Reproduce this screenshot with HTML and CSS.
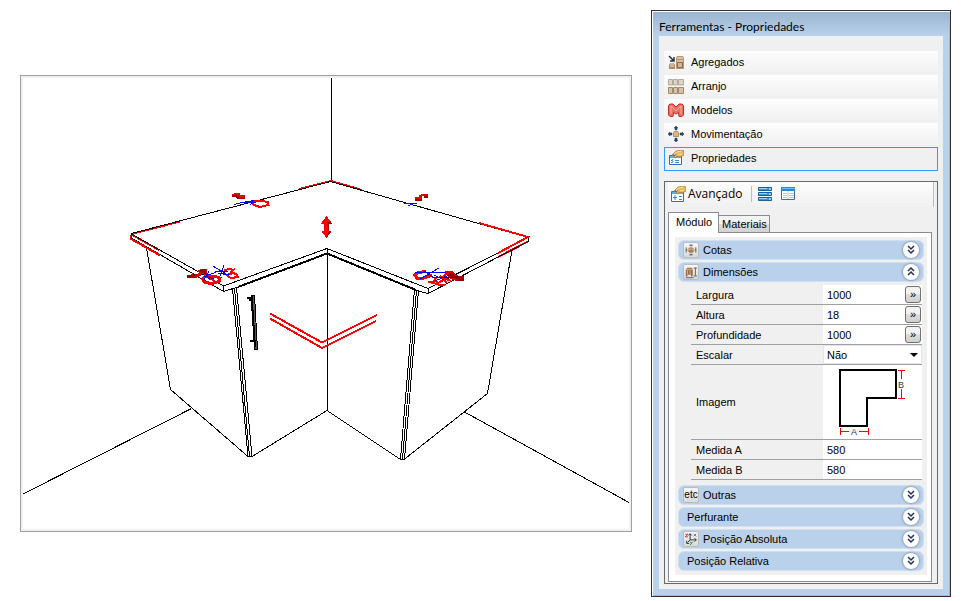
FILE: index.html
```html
<!DOCTYPE html>
<html lang="pt-BR">
<head>
<meta charset="utf-8">
<title>Ferramentas - Propriedades</title>
<link rel="stylesheet" href="styles.css">
</head>
<body>
<main class="workspace">
  <section class="viewer" aria-label="Vista 3D">
    <svg class="scene" viewBox="23 78 606 451" fill="none" stroke="#000" stroke-width="1" shape-rendering="crispEdges">
      <!-- room -->
      <path d="M331.500 78V181M23 494L191.500 408.500M464.500 412L629 502.500"/>
      <!-- cabinet sides -->
      <path d="M146.500 248L170.500 389.500L248 456.500M512 250L487.500 393.500L404 459.500"/>
      <path d="M252 456.500L327 410.500L400.500 459.500M327.500 249V410"/>
      <!-- door posts -->
      <path d="M232.500 288.500L248 456.500H252L236.500 287.500M234.500 288L249.500 456.500"/>
      <path d="M414.500 289L400.500 459H404.500L418.500 290M416.500 290L402.500 459"/>
      <!-- worktop -->
      <g stroke="#f00" stroke-width="2">
        <path d="M131.500 234L180 221.500M299 189L331 181L362 190M479 223L528 237L498 253"/>
        <path d="M131 235V239L160 255M131.500 234.500L159 250M528 241.500L498 257"/>
      </g>
      <path d="M131.500 233.500L330.500 181.500L528 237.500V241.500L428 293.500L415 290M131.500 234L223.500 286L327 248.500L428 288.500L498 253M131.500 234V238L223.500 291.500V286M428 288.500V293.500M223.500 291.500L238 287"/>
      <path d="M238 287L327 253.500L416 290" stroke-width="2"/>
      <path d="M133 240L160 255.500M479 223L528 237L498 253" stroke="#f00" stroke-width="2"/>
      <!-- shelf -->
      <path d="M270 313.500L322 342.500L377 315M270 318.500L322 348L376 321" stroke="#f00" stroke-width="2"/>
      <!-- handle -->
      <path d="M251 295H254.500L257.500 349.500H254.500Z" fill="#555"/>
      <path d="M247 298H252M249 300H252M250 341H254M251.500 295L255 347" stroke-width="2"/>
      <!-- vertical arrow -->
      <path d="M326.500 216L332 223.500H329V230.500H332L326.500 238L321 230.500H324V223.500H321Z" fill="#f00" stroke="none"/>
      <path d="M329 221L332 223.500H329V230.500H332L327 237L329 230H328V223Z" fill="#a00000" stroke="none"/>
      <!-- markers behind -->
      <g stroke="none">
        <path d="M232 194L235 193H240V195H245V199H238L236 196H232Z" fill="#e00000"/>
        <path d="M232 195H236L239 198H245V199H237L235 197H232Z" fill="#900"/>
        <path d="M415 197L419 196.500V195L423 194H428V198H424V196H422V201H415Z" fill="#e00000"/>
        <path d="M415 199H422V201H415ZM424 196H428V198H424Z" fill="#900"/>
      </g>
      <path d="M251 200.500L258 200.500L268 202L268.500 205L260 207L254 205L252 202" stroke="#f00" stroke-width="2"/>
      <path d="M234 204.500L240 203L254 200.500M241 202.500H256M250 205L254 200M404 203.500H417M408 205.500L413 204" stroke="#00f"/>
      <!-- markers on the left corner -->
      <path d="M187 277L193 273V275L199 273L197 271L201 269H207V276L203 274L200 276L196 278H187Z" fill="#e00000" stroke="none"/>
      <path d="M187 275H195V278H187ZM198 270L206 269V272L207 276L203 273Z" fill="#900" stroke="none"/>
      <path d="M206 276L202.500 279L205 282.500L212 283.500L219 281.500L220 278L214 276H208" stroke="#f00" stroke-width="3"/>
      <path d="M207 277L215 281" stroke="#f00" stroke-width="2"/>
      <path d="M224 270L232 268.500M223 273L227 275L233 273L237 274.500L238 277L231 278L227 276M235 269L230 272" stroke="#f00" stroke-width="2"/>
      <path d="M203 282L209 271M204 276L214 279M205 273L210 280M207 275.500L219 271M213 266L226 274M224 265L220 276M215 272L228 271M218 273L229 275" stroke="#00f"/>
      <!-- markers on the right corner -->
      <path d="M426 271.500L418 272.500L414.500 275L417 278H424L432 275" stroke="#f00" stroke-width="3"/>
      <path d="M428 281.500L440 285H445M434 280L438 283L443 280M440 276L447 283M436 278L433 282M443 278L451 281M446 274L441 278" stroke="#f00" stroke-width="2"/>
      <path d="M445 271H452L455 274L459 276L464 278V281H457L450 279L447 276Z" fill="#e00000" stroke="none"/>
      <path d="M446 274L452 273L455 276H464V281H457L456 277H450Z" fill="#900" stroke="none"/>
      <path d="M415 272.500H446M420 279L439 268M424 271L434 278M432 277.500H457M435 281L449 275M434 275L444 280" stroke="#00f"/>
    </svg>
  </section>

  <aside class="window">
    <h1 class="window-title">Ferramentas - Propriedades</h1>
    <div class="window-body">
      <nav class="tools">
        <button class="tool" type="button">
          <svg class="icon" viewBox="0 0 16 16"><path d="M1 2l5 5M6 3v4H2" fill="none" stroke="#234" stroke-width="1.500"/><path d="M1 11l1-2h4l1 2v4H1z" fill="#ae8b68"/><path d="M2 10h4M2 12h4" stroke="#f0dfc9"/><path d="M8 4l1-2h6l1 2v11H8z" fill="#b79675"/><path d="M9 4h6M9 7h6" stroke="#faead7"/><path d="M9.500 8.500h5v5h-5z" fill="#d3b798" stroke="#8c6b4a"/></svg>
          Agregados
        </button>
        <button class="tool" type="button">
          <svg class="icon" viewBox="0 0 16 16"><g fill="#ddd2c4" stroke="#b5a997"><path d="M.5 7V1.500h4V7zM5.500 7V1.500h4V7zM10.500 7V1.500h5V7z"/></g><g fill="#d6c2a9" stroke="#a08a6d"><path d="M.5 15.500V9.500h4v6zM5.500 15.500V9.500h4v6zM10.500 15.500V9.500h5v6z"/></g></svg>
          Arranjo
        </button>
        <button class="tool" type="button">
          <svg class="icon" viewBox="0 0 16 16"><path d="M.5 3.500L2 2h3l3 3 3-3h3l1.500 1.500V13L14 14.500h-3l-.5-4L8 12l-2.500-1.500-.5 4H2L.5 13z" fill="#ee6d62" stroke="#b8332f"/><path d="M3 12V4l5 5 5-5v8" fill="none" stroke="#ffb1a3"/></svg>
          Modelos
        </button>
        <button class="tool" type="button">
          <svg class="icon" viewBox="0 0 16 16"><path d="M8 0l2 2H9v2H7V2H6zM8 16l2-2H9v-2H7v2H6zM0 8l2-2v1h2v2H2v1zM16 8l-2-2v1h-2v2h2v1z" fill="#1e4777" stroke="#1e4777" stroke-width=".5"/><path d="M5 7l1-2h4l1 2v4H5z" fill="#bf935f"/><path d="M6 7h4M6 9h4" stroke="#f5d5aa"/></svg>
          Movimentação
        </button>
        <button class="tool tool-active" type="button">
          <svg class="icon" viewBox="0 0 16 16"><path d="M1.500 5.500h12v9h-12z" fill="#fff" stroke="#1976c8"/><path d="M2 6h11v2H2z" fill="#5daeea"/><path d="M3 10l1 1 1-2M7 10.500h4M3 12l1 1 1-2M7 12.500h4" fill="none" stroke="#3989ca"/><path d="M4 5l4-4 6-1 2 1v4l-4 2-2-1-3 2-1-1 2-3H6L4 6z" fill="#edb75e" stroke="#a56d23" stroke-width=".7"/><path d="M6 4l3-2 4-1M10 5l4-1" fill="none" stroke="#ffe4a0"/></svg>
          Propriedades
        </button>
      </nav>

      <div class="props">
        <div class="toolbar">
          <button class="toolbar-mode" type="button">
            <svg class="icon" viewBox="0 0 16 16"><path d="M1.500 5.500h12v10h-12z" fill="#fff" stroke="#1976c8"/><path d="M2 6h11v2H2z" fill="#5daeea"/><path d="M3 11.500h4M5 9v5M9 10.500h3M9 13.500h3" stroke="#3989ca"/><path d="M4 5l4-4 6-1 2 1v4l-4 2-2-1-3 2-1-1 2-3H6L4 6z" fill="#edb75e" stroke="#a56d23" stroke-width=".7"/><path d="M6 4l3-2 4-1M10 5l4-1" fill="none" stroke="#ffe4a0"/></svg>
            Avançado
          </button>
          <button class="toolbar-icon" type="button" aria-label="Lista">
            <svg class="icon" viewBox="0 0 16 16"><g fill="#3e96de" stroke="#17609e"><path d="M1.500 1.500h13v3h-13zM1.500 6.500h13v3h-13zM1.500 11.500h13v3h-13z"/></g><path d="M2 2.500h8M2 7.500h8M2 12.500h8" stroke="#99d0fa"/><path d="M12 3h2M12 8h2M12 13h2" stroke="#fff"/></svg>
          </button>
          <button class="toolbar-icon" type="button" aria-label="Tabela">
            <svg class="icon" viewBox="0 0 16 16"><path d="M1.500 1.500h13v12h-13z" fill="#fff" stroke="#356f9e"/><path d="M1 1h14v4H1z" fill="#2388da"/><path d="M2 2.500h13" stroke="#79bef2"/><path d="M8 5v8M3 7.500h4M9 7.500h5M3 9.500h4M9 9.500h5M3 11.500h4M9 11.500h5" stroke="#b3c9da"/></svg>
          </button>
        </div>

        <div class="tabs" role="tablist">
          <button class="tab tab-active" type="button" role="tab" aria-selected="true">Módulo</button>
          <button class="tab" type="button" role="tab" aria-selected="false">Materiais</button>
        </div>

        <div class="tab-panel" role="tabpanel">
          <div class="groups">
            <button class="group" type="button">
              <svg class="icon chip" viewBox="0 0 16 16"><path d="M5 6l1-1h4l1 1v4l-1 1H6l-1-1z" fill="#a87e58"/><path d="M5 7h6" stroke="#dec09a"/><path d="M6 2.500h4M8 2v2M6 13.500h4M8 12v2M2.500 5v6M2 8h2M13.500 5v6M12 8h2" stroke="#555"/></svg>
              <span class="group-name">Cotas</span>
              <svg class="chevron" viewBox="0 0 16 16"><path d="M5 4l3 3 3-3M5 8l3 3 3-3"/></svg>
            </button>
            <button class="group" type="button" aria-expanded="true">
              <svg class="icon chip" viewBox="0 0 16 16"><path d="M2 5l2-2h5l1 2v7l-1 1H8v-2H4v2H2z" fill="#98704e"/><path d="M2 5h8M4 6v5M7 6v5" stroke="#d9b891"/><path d="M11 3.500h4M11 12.500h4M13 3v9M2 14.500h9" stroke="#555"/></svg>
              <span class="group-name">Dimensões</span>
              <svg class="chevron" viewBox="0 0 16 16"><path d="M5 7l3-3 3 3M5 11l3-3 3 3"/></svg>
            </button>

            <table class="fields">
              <tr>
                <th scope="row"><label for="largura">Largura</label></th>
                <td><div class="cell"><input id="largura" type="text" value="1000"><button class="more" type="button" aria-label="Editar largura">»</button></div></td>
              </tr>
              <tr>
                <th scope="row"><label for="altura">Altura</label></th>
                <td><div class="cell"><input id="altura" type="text" value="18"><button class="more" type="button" aria-label="Editar altura">»</button></div></td>
              </tr>
              <tr>
                <th scope="row"><label for="profundidade">Profundidade</label></th>
                <td><div class="cell"><input id="profundidade" type="text" value="1000"><button class="more" type="button" aria-label="Editar profundidade">»</button></div></td>
              </tr>
              <tr>
                <th scope="row"><label for="escalar">Escalar</label></th>
                <td><div class="cell select-cell"><select id="escalar"><option>Não</option><option>Sim</option></select></div></td>
              </tr>
              <tr>
                <th scope="row">Imagem</th>
                <td>
                  <svg class="shape" viewBox="823 365 98 74" fill="none">
                    <path d="M840 370H896V398H867V426H840Z" stroke="#000" stroke-width="2" shape-rendering="crispEdges"/>
                    <path d="M898 370.500H905M898 398.500H905M901.500 370V379M901.500 389V398M840.500 428V435M868.500 428V435M840 431.500H849M859 431.500H868" stroke="#f00" shape-rendering="crispEdges"/>
                    <text x="901" y="388" text-anchor="middle">B</text>
                    <text x="854" y="435" text-anchor="middle">A</text>
                  </svg>
                </td>
              </tr>
              <tr>
                <th scope="row"><label for="medida-a">Medida A</label></th>
                <td><div class="cell"><input id="medida-a" type="text" value="580"></div></td>
              </tr>
              <tr>
                <th scope="row"><label for="medida-b">Medida B</label></th>
                <td><div class="cell"><input id="medida-b" type="text" value="580"></div></td>
              </tr>
            </table>

            <button class="group" type="button">
              <span class="chip chip-text">etc</span>
              <span class="group-name">Outras</span>
              <svg class="chevron" viewBox="0 0 16 16"><path d="M5 4l3 3 3-3M5 8l3 3 3-3"/></svg>
            </button>
            <button class="group" type="button">
              <span class="group-name">Perfurante</span>
              <svg class="chevron" viewBox="0 0 16 16"><path d="M5 4l3 3 3-3M5 8l3 3 3-3"/></svg>
            </button>
            <button class="group" type="button">
              <svg class="icon chip" viewBox="0 0 16 16" fill="none"><path d="M1.500 2.500h3l-3 3h3" stroke="#d02020"/><path d="M5 4l2-2 2 2M7 2v7h7M12 7l2 2-2 2M7 9l-3 3M3 10v3h3" stroke="#222"/><path d="M11 2l3 3M14 2l-3 3" stroke="#3c78b0"/><path d="M7 11l1.500 2M10 11l-3 4" stroke="#188a30"/></svg>
              <span class="group-name">Posição Absoluta</span>
              <svg class="chevron" viewBox="0 0 16 16"><path d="M5 4l3 3 3-3M5 8l3 3 3-3"/></svg>
            </button>
            <button class="group" type="button">
              <span class="group-name">Posição Relativa</span>
              <svg class="chevron" viewBox="0 0 16 16"><path d="M5 4l3 3 3-3M5 8l3 3 3-3"/></svg>
            </button>
          </div>
        </div>
      </div>
    </div>
  </aside>
</main>
</body>
</html>
```
FILE: styles.css
```css
* {
  box-sizing: border-box;
}

body {
  margin: 0;
  background: #fff;
  color: #000;
  font: 11px/14px "Liberation Sans", Arial, sans-serif;
}

button,
input,
select {
  margin: 0;
  padding: 0;
  border: 0;
  background: none;
  color: inherit;
  font: inherit;
}

.workspace {
  display: grid;
  grid-template-columns: 1fr 300px;
  gap: 19px;
  align-items: start;
  padding: 10px 16px 4px 20px;
}

.viewer {
  margin-top: 65px;
  padding: 2px;
  border: 1px solid #a0a0a0;
  background: #f0f0f0;
}

.scene {
  display: block;
  width: 100%;
  background: #fff;
}

.icon {
  flex: none;
  width: 16px;
  height: 16px;
}

/* Tool window */
.window {
  padding: 0 7px 7px 6px;
  border: 1px solid #303030;
  background: linear-gradient(#99b4d1, #b9d1ea 25px);
  box-shadow: inset 1px 1px #fff, inset -1px -1px #5fd3f3;
}

.window-title {
  margin: 0;
  padding: 8px 1px 1px;
  font: 12px/16px Lato, "Open Sans", sans-serif;
}

.window-body {
  margin-left: 1px;
  padding: 15px 5px 5px;
  background: #f0f0f0;
}

.tools {
  display: flex;
  flex-direction: column;
}

.tool {
  display: flex;
  align-items: center;
  gap: 7px;
  height: 24px;
  padding: 0 4px 2px;
  background: linear-gradient(#fdfdfd, #f0f0f0);
  text-align: left;
}

.tool-active {
  padding: 0 3px 2px;
  border: 1px solid #3399ff;
  background: #f0f0f0;
}

.props {
  margin-top: 10px;
  padding: 0 5px 1px 3px;
  border: 1px solid #696969;
  background: #f0f0f0;
}

.toolbar {
  display: flex;
  align-items: center;
  gap: 7px;
  height: 25px;
  margin-right: -2px;
  padding: 0 0 2px 2px;
  border-right: 1px solid #c0c0c0;
  background: linear-gradient(#fdfdfd, #f0f0f0);
}

.toolbar-mode {
  display: flex;
  align-items: center;
  gap: 2px;
  padding-right: 8px;
  border-right: 1px solid #bdbdbd;
  font: 12px/16px "Open Sans", "Noto Sans", sans-serif;
}

.toolbar-icon {
  display: flex;
}

.toolbar-mode + .toolbar-icon {
  margin-left: -2px;
}

.tabs {
  display: flex;
  align-items: flex-end;
  margin-top: 5px;
}

.tab {
  height: 17px;
  padding: 0 2px 0 3px;
  border: 1px solid #898c95;
  border-width: 1px 1px 0 0;
  background: linear-gradient(#f3f3f3 50%, #dddddd 50%, #d2d2d2);
}

.tab-active {
  position: relative;
  height: 21px;
  margin-bottom: -1px;
  padding: 0 6px 2px 7px;
  border-left-width: 1px;
  background: #fff;
}

.tab-panel {
  padding: 4px 4px 6px 6px;
  border: 1px solid #898c95;
  background: #fff;
}

.groups {
  display: flex;
  flex-direction: column;
  gap: 2px;
  padding: 3px 3px 4px;
  background: #f0f0f0;
}

.group {
  display: flex;
  align-items: center;
  gap: 3px;
  height: 20px;
  padding: 0 4px;
  border: 1px solid #cfe0f1;
  border-radius: 6px;
  background: #b9d1ea;
}

.group-name {
  flex: 1;
  padding-left: 1px;
  text-align: left;
}

.group-name:first-child {
  padding-left: 4px;
}

.chip {
  border: 1px solid #bcbcbc;
  border-radius: 2px;
  background: linear-gradient(#f6f6f6, #dadada);
}

.chip-text {
  width: 16px;
  height: 16px;
  font-size: 10px;
  line-height: 14px;
  text-align: center;
}

.chevron {
  width: 16px;
  height: 16px;
  border-radius: 50%;
  background: #fff;
  box-shadow: 0 0 2px 1px #8d9eb5;
  fill: none;
  stroke: #1f3064;
  stroke-width: 1.5;
}

/* Property fields */
.fields {
  width: calc(100% - 15px);
  margin: 1px 0 3px 13px;
  border-collapse: collapse;
  table-layout: fixed;
}

.fields tr {
  border-bottom: 1px solid #a0a0a0;
}

.fields th {
  width: 132px;
  padding: 0 5px;
  font-weight: normal;
  text-align: left;
}

.fields td {
  padding: 0;
  background: #fff;
}

.cell {
  display: flex;
  align-items: center;
  height: 19px;
  padding-left: 4px;
}

.cell input {
  flex: 1;
  min-width: 0;
}

.more {
  width: 16px;
  height: 17px;
  margin-right: 1px;
  border: 1px solid #707070;
  border-radius: 3px;
  background: linear-gradient(#f2f2f2 50%, #dddddd 50%, #cfcfcf);
  line-height: 15px;
}

.select-cell {
  position: relative;
  border: 1px solid #e3e6f2;
  padding-left: 3px;
}

.select-cell::after {
  content: "";
  position: absolute;
  right: 3px;
  border: 4px solid transparent;
  border-width: 4px 4px 0;
  border-top-color: #000;
  pointer-events: none;
}

.cell select {
  flex: 1;
  appearance: none;
}

.shape {
  display: block;
  width: 98px;
  height: 74px;
}

.shape text {
  fill: #333;
  font-size: 9px;
}
```
